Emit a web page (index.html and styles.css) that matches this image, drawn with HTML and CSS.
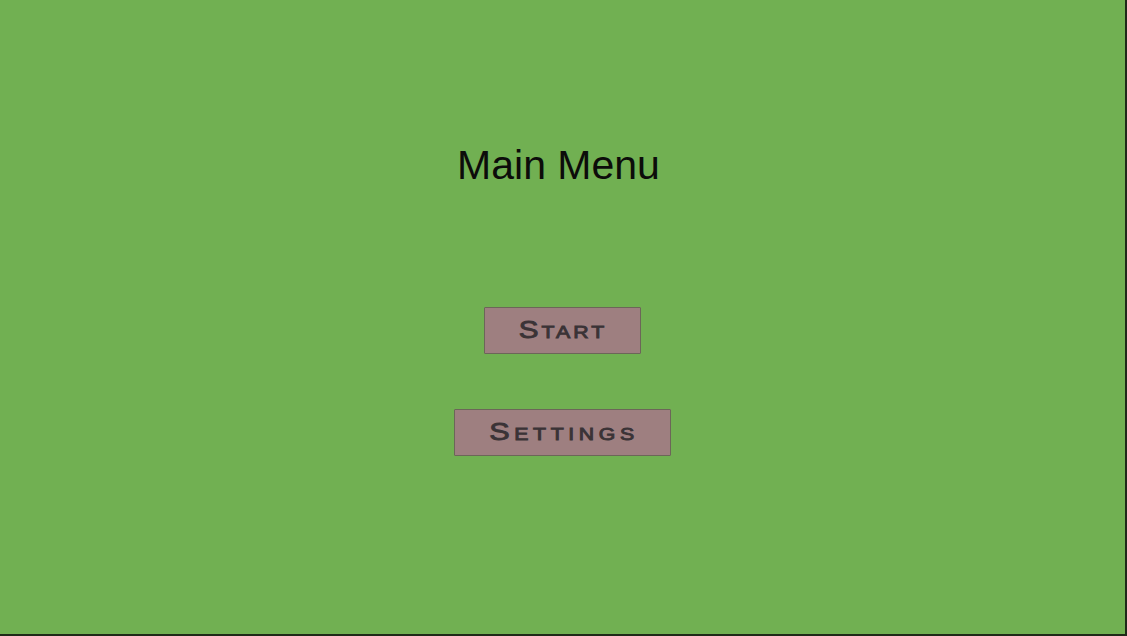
FILE: index.html
```html
<!DOCTYPE html>
<html>
<head>
<meta charset="utf-8">
<link rel="stylesheet" href="styles.css">
</head>
<body>
<div class="screen">
  <h1 class="title">Main Menu</h1>
  <div class="buttons">
    <button class="btn btn-start"><span class="label">Start</span></button>
    <button class="btn btn-settings"><span class="label">Settings</span></button>
  </div>
</div>
</body>
</html>
```
FILE: styles.css
```css
html, body {
  margin: 0;
  padding: 0;
  width: 1127px;
  height: 636px;
  overflow: hidden;
}
.screen {
  box-sizing: border-box;
  width: 1127px;
  height: 636px;
  background: #71b052;
  border-right: 2px solid #1e2a18;
  border-bottom: 2px solid #1e2a18;
  display: flex;
  flex-direction: column;
  align-items: center;
}
.title {
  margin: 141px 0 0 -8px;
  font-family: "Liberation Sans", Arial, sans-serif;
  font-weight: normal;
  font-size: 41px;
  line-height: 48px;
  color: #0c0c0a;
}
.buttons {
  margin-top: 118px;
  display: flex;
  flex-direction: column;
  align-items: center;
  gap: 55px;
}
.btn {
  box-sizing: border-box;
  height: 47px;
  background: #9e7f80;
  border: 1px solid #6c6658;
  border-radius: 1px;
  padding: 0;
  margin-left: -1px;
  display: flex;
  align-items: center;
  justify-content: center;
}
.label {
  display: inline-block;
  font-family: "Liberation Sans", Arial, sans-serif;
  font-weight: normal;
  font-variant: small-caps;
  color: #3a3336;
  -webkit-text-stroke: 0.9px #3a3336;
  transform: scaleX(1.25);
  line-height: 1;
}
.btn-start { width: 157px; }
.btn-start .label {
  font-size: 23.7px;
  letter-spacing: 2.4px;
  padding-left: 2.4px;
}
.btn-settings { width: 217px; }
.btn-settings .label {
  font-size: 24.5px;
  letter-spacing: 3.7px;
  padding-left: 3.7px;
}
```
